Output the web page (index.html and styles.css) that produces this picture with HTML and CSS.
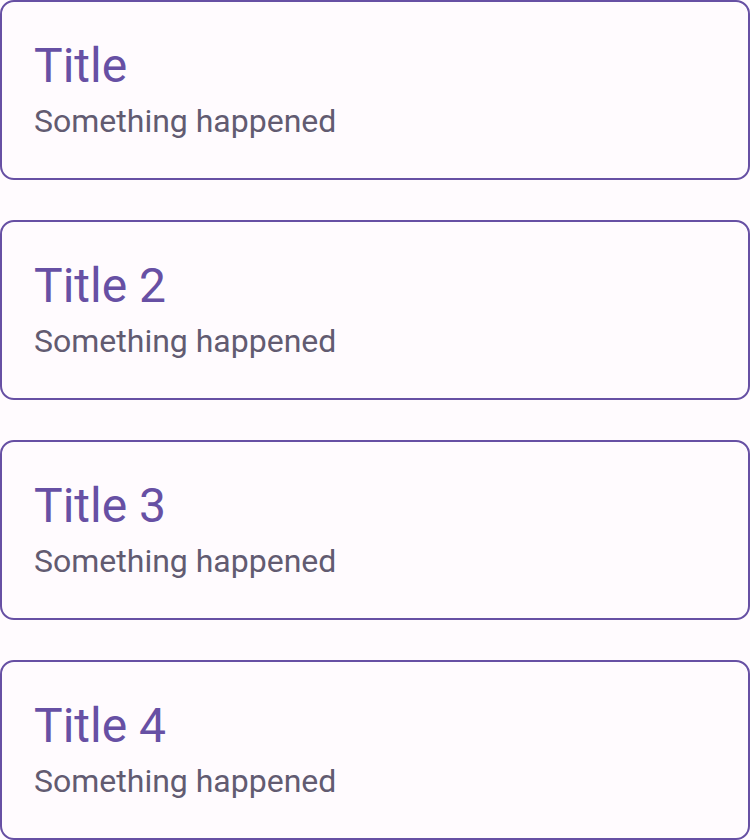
FILE: index.html
```html
<!DOCTYPE html>
<html>
<head>
<meta charset="utf-8">
<link rel="stylesheet" href="styles.css">
</head>
<body>
<div class="list">
  <div class="card"><div class="title">Title</div><div class="sub">Something happened</div></div>
  <div class="card"><div class="title">Title 2</div><div class="sub">Something happened</div></div>
  <div class="card"><div class="title">Title 3</div><div class="sub">Something happened</div></div>
  <div class="card"><div class="title">Title 4</div><div class="sub">Something happened</div></div>
</div>
</body>
</html>
```
FILE: styles.css
```css
html, body {
  margin: 0;
  background: #FFFBFE;
  font-family: Roboto, "Noto Sans", sans-serif;
}
.list {
  display: flex;
  flex-direction: column;
  gap: 40px;
  width: 750px;
}
.card {
  box-sizing: border-box;
  height: 180px;
  border: 2px solid #6750A4;
  border-radius: 14px;
  padding: 35px 32px 0 32px;
  display: flex;
  flex-direction: column;
}
.title {
  color: #6750A4;
  font-size: 48px;
  line-height: 58px;
}
.sub {
  color: #625B71;
  font-size: 32px;
  line-height: 52px;
}
```
